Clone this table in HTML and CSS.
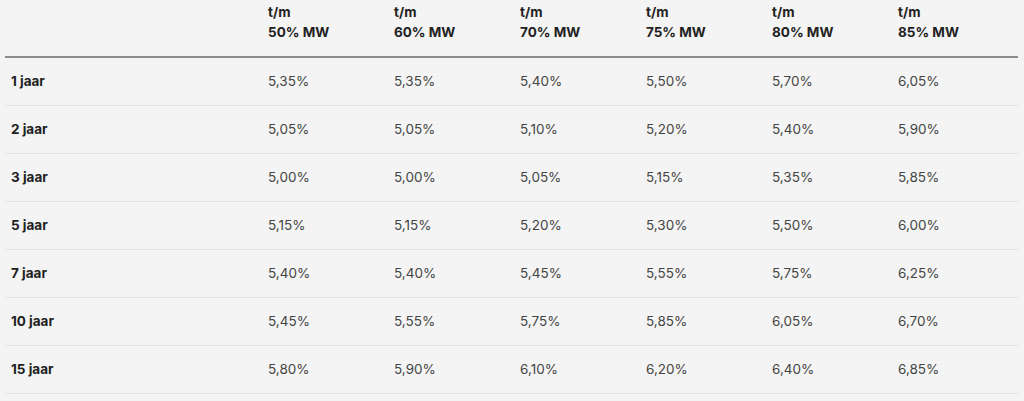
FILE: index.html
```
<!DOCTYPE html>
<html lang="nl">
<head>
<meta charset="utf-8">
<title>Rentetabel</title>
<link rel="stylesheet" href="styles.css">
</head>
<body>
<table class="rates">
  <thead>
    <tr>
      <th class="label"></th>
      <th>t/m<br>50% MW</th>
      <th>t/m<br>60% MW</th>
      <th>t/m<br>70% MW</th>
      <th>t/m<br>75% MW</th>
      <th>t/m<br>80% MW</th>
      <th>t/m<br>85% MW</th>
    </tr>
  </thead>
  <tbody>
    <tr><td class="label">1 jaar</td><td>5,35%</td><td>5,35%</td><td>5,40%</td><td>5,50%</td><td>5,70%</td><td>6,05%</td></tr>
    <tr><td class="label">2 jaar</td><td>5,05%</td><td>5,05%</td><td>5,10%</td><td>5,20%</td><td>5,40%</td><td>5,90%</td></tr>
    <tr><td class="label">3 jaar</td><td>5,00%</td><td>5,00%</td><td>5,05%</td><td>5,15%</td><td>5,35%</td><td>5,85%</td></tr>
    <tr><td class="label">5 jaar</td><td>5,15%</td><td>5,15%</td><td>5,20%</td><td>5,30%</td><td>5,50%</td><td>6,00%</td></tr>
    <tr><td class="label">7 jaar</td><td>5,40%</td><td>5,40%</td><td>5,45%</td><td>5,55%</td><td>5,75%</td><td>6,25%</td></tr>
    <tr><td class="label">10 jaar</td><td>5,45%</td><td>5,55%</td><td>5,75%</td><td>5,85%</td><td>6,05%</td><td>6,70%</td></tr>
    <tr><td class="label">15 jaar</td><td>5,80%</td><td>5,90%</td><td>6,10%</td><td>6,20%</td><td>6,40%</td><td>6,85%</td></tr>
  </tbody>
</table>
</body>
</html>
```
FILE: styles.css
```
html, body {
  margin: 0;
  padding: 0;
  background: #f4f4f4;
}
body {
  padding: 0 6px 0 5px;
  font-family: Inter, "Noto Sans", "Liberation Sans", sans-serif;
  font-size: 13.5px;
  color: #444;
}
.rates {
  width: 1013px;
  border-collapse: collapse;
  table-layout: fixed;
}
.rates th,
.rates td {
  text-align: left;
  padding: 0 6px;
  line-height: 20px;
  width: 114px;
}
.rates .label {
  width: 245px;
}
.rates thead th {
  font-weight: 700;
  color: #222;
  padding-top: 2px;
  padding-bottom: 14px;
  border-bottom: 2px solid #8c8c8c;
  vertical-align: bottom;
}
.rates tbody td {
  padding-top: 13px;
  padding-bottom: 14px;
  border-bottom: 1px solid #e2e2e2;
}
.rates tbody td.label {
  font-weight: 700;
  color: #222;
}
```
